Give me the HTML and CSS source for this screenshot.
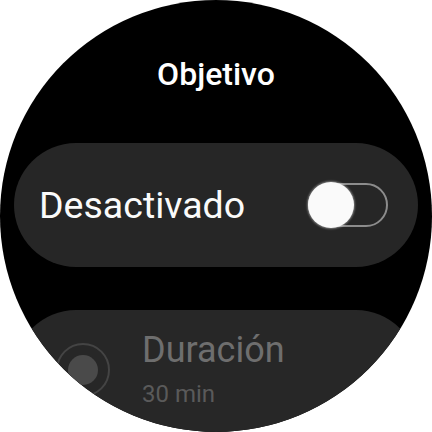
FILE: index.html
```html
<!DOCTYPE html>
<html lang="es">
<head>
  <meta charset="UTF-8">
  <title>Objetivo</title>
  <link rel="stylesheet" href="styles.css">
</head>
<body>

<div class="watch">
  <h1 class="title">Objetivo</h1>

  <div class="card card-switch">
    <span class="card-label">Desactivado</span>
    <span class="toggle"><span class="knob"></span></span>
  </div>

  <div class="card card-option">
    <span class="radio"><span class="radio-dot"></span></span>
    <div class="option-text">
      <div class="option-title">Duración</div>
      <div class="option-sub">30 min</div>
    </div>
  </div>
</div>

</body>
</html>
```

FILE: styles.css
```css
body {
  margin: 0;
  background: #fff;
  font-family: Roboto, 'Noto Sans', sans-serif;
}
.watch {
  width: 432px;
  height: 432px;
  border-radius: 50%;
  overflow: hidden;
  background: #000;
  box-sizing: border-box;
  padding-top: 55px;
}
.title {
  margin: 0;
  text-align: center;
  color: #fff;
  font-size: 32px;
  font-weight: 500;
  line-height: 38px;
}
.card {
  width: 404px;
  height: 124px;
  margin: 0 auto;
  box-sizing: border-box;
  border-radius: 62px;
  background: #262626;
  display: flex;
}
.card-switch {
  margin-top: 50px;
  align-items: center;
  justify-content: space-between;
  padding: 0 30px 0 25px;
}
.card-label {
  color: #fafafa;
  font-size: 37.5px;
  line-height: 44px;
}
.toggle {
  position: relative;
  width: 80px;
  height: 44px;
  box-sizing: border-box;
  border: 2px solid #8c8c8c;
  border-radius: 22px;
}
.knob {
  position: absolute;
  left: -2px;
  top: -3px;
  width: 46px;
  height: 46px;
  border-radius: 50%;
  background: #fafafa;
  box-shadow: 0 0 2px 1px rgba(250, 250, 250, 0.4);
}
.card-option {
  margin-top: 43px;
  align-items: flex-start;
  padding: 18px 0 0 42px;
  background: #272727;
}
.radio {
  margin-top: 15px;
  width: 54px;
  height: 54px;
  box-sizing: border-box;
  border: 2px solid #444;
  border-radius: 50%;
  display: flex;
  align-items: center;
  justify-content: center;
}
.radio-dot {
  width: 30px;
  height: 30px;
  border-radius: 50%;
  background: #4a4a4a;
}
.option-text {
  margin-left: 32px;
}
.option-title {
  color: #6e6e6e;
  font-size: 36px;
  line-height: 44px;
}
.option-sub {
  margin-top: 7px;
  color: #5a5a5a;
  font-size: 24px;
  line-height: 30px;
}
```
